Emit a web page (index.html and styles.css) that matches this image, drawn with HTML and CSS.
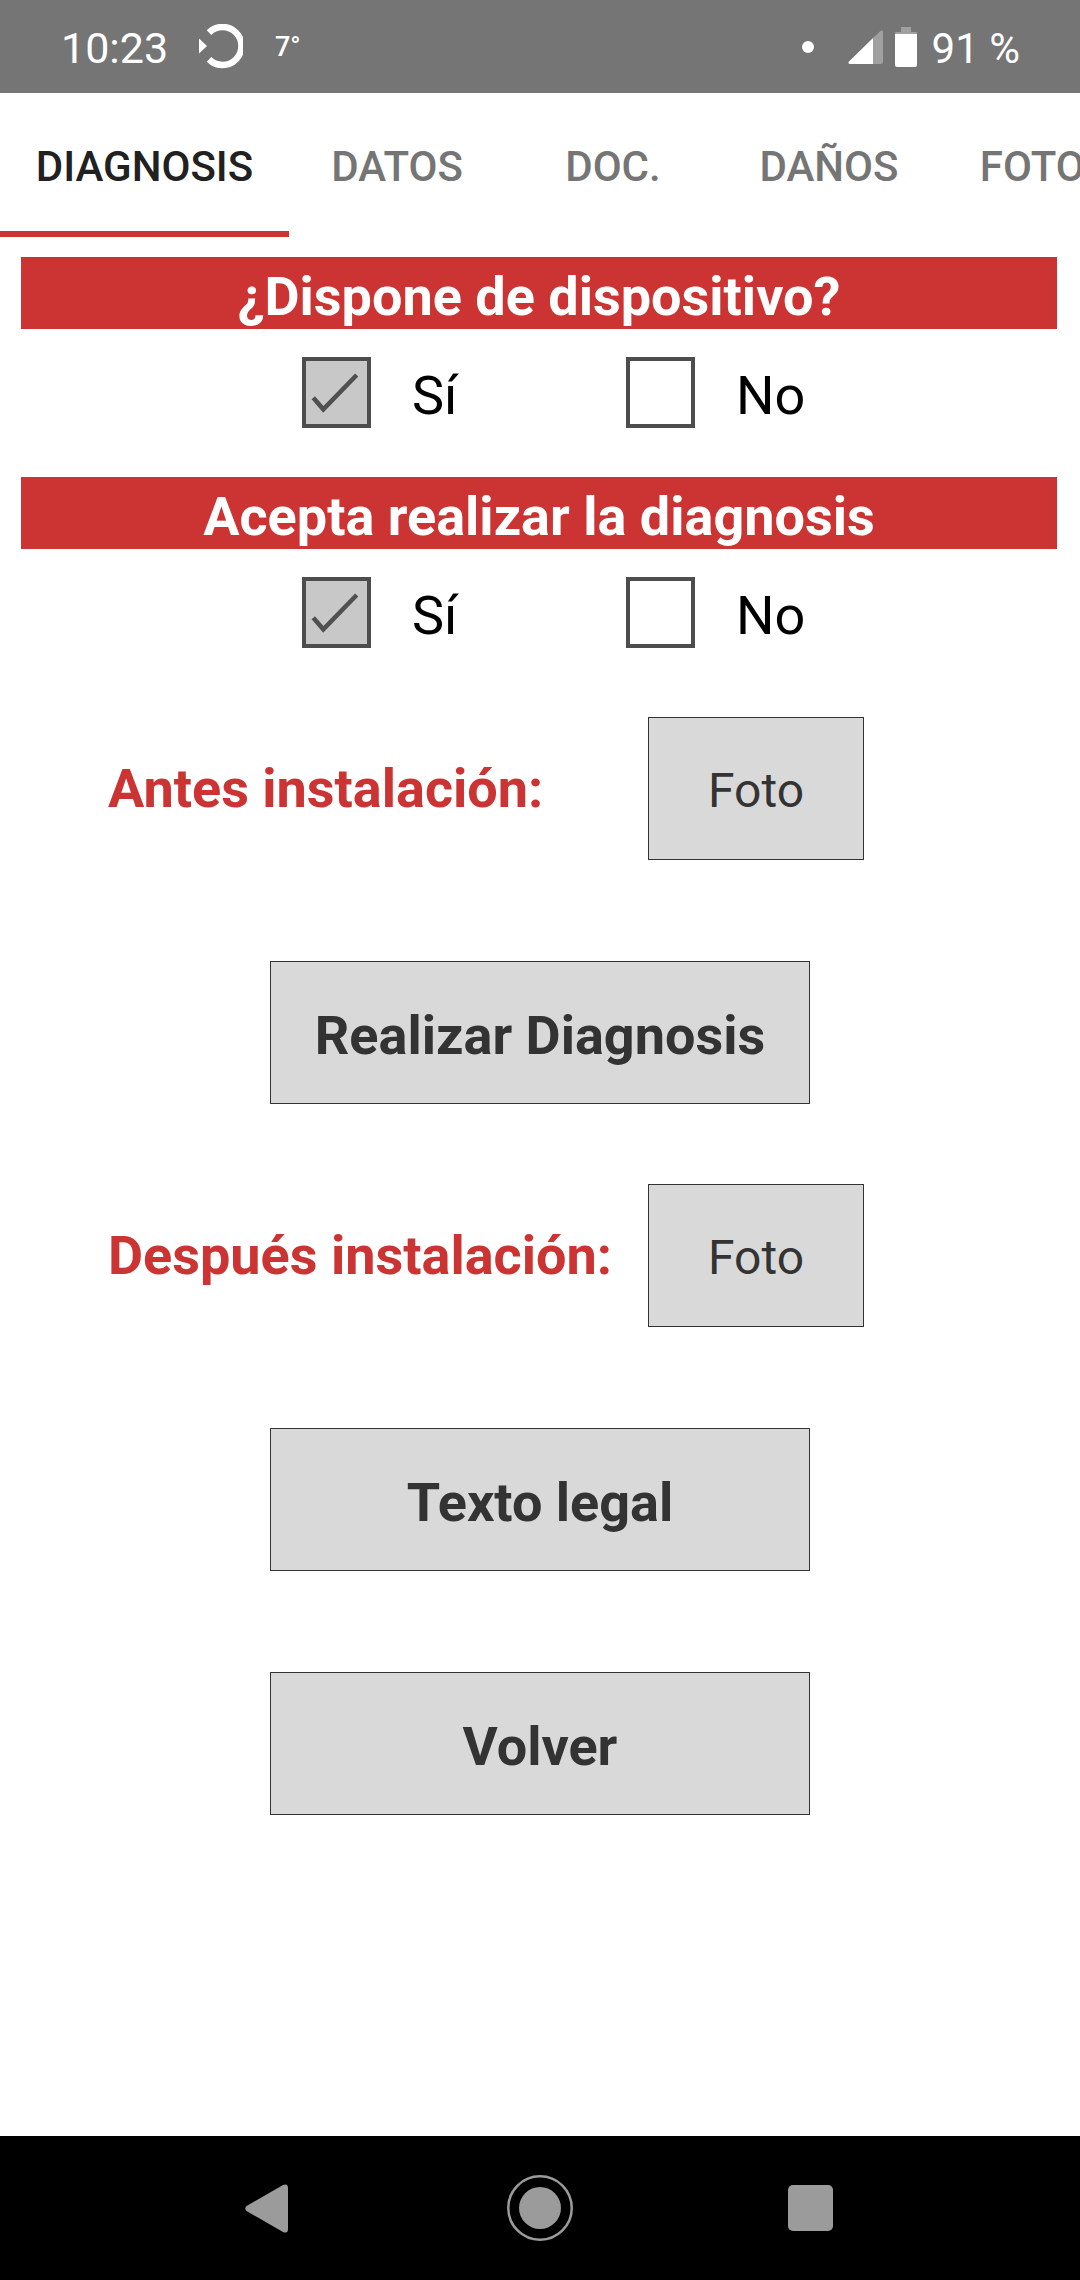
FILE: index.html
```html
<!DOCTYPE html>
<html>
<head>
    <title>Diagnosis</title>
    <link rel="stylesheet" href="styles.css">
</head>
<body>
    <div class="status-bar">
        <span class="clock">10:23</span>
        <svg class="spinner" width="44" height="46" viewBox="0 0 44 46">
            <path d="M10 8.6 A19 19 0 1 1 10 35.4" fill="none" stroke="#fff" stroke-width="6.5"/>
            <path d="M0 14.5 L8 22 L0 29.5 Z" fill="#fff"/>
        </svg>
        <span class="temp">7°</span>
        <span class="status-right">
            <span class="dot"></span>
            <svg class="signal" width="35" height="34" viewBox="0 0 35 34">
                <path d="M25 8 L0.5 32 Q0 34 2 34 L25 34 Z" fill="#fff"/>
                <path d="M25 8 L33 0.5 Q35 0 35 2 L35 32 Q35 34 33 34 L25 34 Z" fill="#a0a0a0"/>
            </svg>
            <svg class="battery" width="22" height="40" viewBox="0 0 22 40">
                <path d="M6 0 H16 V5 H21 Q22 5 22 6 V7 H0 V6 Q0 5 1 5 H6 Z" fill="#a0a0a0"/>
                <path d="M0 7 H22 V38 Q22 40 20 40 H2 Q0 40 0 38 Z" fill="#fff"/>
            </svg>
            <span class="battery-text">91 %</span>
        </span>
    </div>

    <nav class="tabs">
        <div class="tab tab-active">DIAGNOSIS</div>
        <div class="tab">DATOS</div>
        <div class="tab">DOC.</div>
        <div class="tab">DAÑOS</div>
        <div class="tab">FOTOS</div>
    </nav>

    <main class="content">
        <h2 class="banner">¿Dispone de dispositivo?</h2>
        <div class="options">
            <div class="option">
                <span class="box box-checked">
                    <svg width="62" height="64" viewBox="0 0 62 64"><path d="M8.3 37.7 L18.3 49.3 L51.7 15" fill="none" stroke="#505050" stroke-width="4.5"/></svg>
                </span>
                <span class="option-label">Sí</span>
            </div>
            <div class="option">
                <span class="box"></span>
                <span class="option-label">No</span>
            </div>
        </div>

        <h2 class="banner banner-next">Acepta realizar la diagnosis</h2>
        <div class="options">
            <div class="option">
                <span class="box box-checked">
                    <svg width="62" height="64" viewBox="0 0 62 64"><path d="M8.3 37.7 L18.3 49.3 L51.7 15" fill="none" stroke="#505050" stroke-width="4.5"/></svg>
                </span>
                <span class="option-label">Sí</span>
            </div>
            <div class="option">
                <span class="box"></span>
                <span class="option-label">No</span>
            </div>
        </div>

        <div class="photo-row photo-first">
            <span class="photo-label">Antes instalación:</span>
            <button class="photo-btn">Foto</button>
        </div>
        <button class="action-btn">Realizar Diagnosis</button>
        <div class="photo-row photo-second">
            <span class="photo-label">Después instalación:</span>
            <button class="photo-btn">Foto</button>
        </div>
        <button class="action-btn">Texto legal</button>
        <button class="action-btn">Volver</button>
    </main>

    <div class="nav-bar">
        <svg class="nav-back" width="43" height="49" viewBox="0 0 43 49">
            <path d="M1.5 22 L38 1 Q43 -1 43 4 L43 45 Q43 50 38 48 L1.5 27 Q-1 24.5 1.5 22 Z" fill="#9b9b9b"/>
        </svg>
        <svg class="nav-home" width="66" height="66" viewBox="0 0 66 66">
            <circle cx="33" cy="33" r="31.75" fill="none" stroke="#9b9b9b" stroke-width="2.5"/>
            <circle cx="33" cy="33" r="21" fill="#9b9b9b"/>
        </svg>
        <span class="nav-square"></span>
    </div>
</body>
</html>
```

FILE: styles.css
```css
* {
    box-sizing: border-box;
}
body {
    margin: 0;
    width: 1080px;
    height: 2280px;
    display: flex;
    flex-direction: column;
    background-color: white;
    font-family: Roboto, sans-serif;
    overflow: hidden;
}

/* status bar */
.status-bar {
    height: 93px;
    background-color: #757575;
    color: white;
    display: flex;
    align-items: center;
    padding-left: 61px;
    flex-shrink: 0;
}
.clock {
    font-size: 43px;
    width: 138px;
    padding-top: 3px;
}
.spinner {
    margin-right: 32px;
}
.temp {
    font-size: 27px;
    font-weight: 500;
}
.status-right {
    margin-left: auto;
    display: flex;
    align-items: center;
    padding-right: 60px;
}
.dot {
    width: 12px;
    height: 12px;
    border-radius: 50%;
    background-color: white;
    margin-right: 34px;
}
.signal {
    margin-right: 12px;
}
.battery {
    margin-right: 15px;
}
.battery-text {
    font-size: 42px;
    padding-top: 3px;
}

/* tabs */
.tabs {
    height: 144px;
    display: flex;
    overflow: hidden;
    flex-shrink: 0;
}
.tab {
    width: 216px;
    flex-shrink: 0;
    display: flex;
    align-items: center;
    justify-content: center;
    padding-top: 2px;
    font-size: 42px;
    font-weight: 500;
    color: #757575;
}
.tab-active {
    width: 289px;
    color: #212121;
    border-bottom: 6px solid #cc3333;
    padding-top: 8px;
}

/* form */
.content {
    flex: 1;
    display: flex;
    flex-direction: column;
    align-items: flex-start;
    padding-top: 20px;
}
.banner {
    width: 1036px;
    height: 72px;
    margin: 0 0 0 21px;
    background-color: #cc3333;
    color: white;
    font-size: 54px;
    font-weight: 700;
    line-height: 79px;
    text-align: center;
}
.banner-next {
    margin-top: 49px;
}
.options {
    display: flex;
    margin: 28px 0 0 302px;
}
.option {
    width: 324px;
    display: flex;
    align-items: center;
    gap: 41px;
}
.box {
    width: 69px;
    height: 71px;
    border: 4px solid #4d4d4d;
    display: block;
}
.box svg {
    display: block;
    margin: -1px 0 0 -1px;
}
.box-checked {
    background-color: #c8c8c8;
}
.option-label {
    font-size: 54px;
    color: black;
    padding-top: 5px;
}
.photo-row {
    display: flex;
    align-items: center;
    padding-left: 108px;
}
.photo-first {
    margin-top: 69px;
}
.photo-second {
    margin-top: 80px;
}
.photo-label {
    width: 540px;
    font-size: 54px;
    font-weight: 700;
    color: #cc3333;
}
.photo-btn {
    width: 216px;
    height: 143px;
    padding: 3px 0 0;
    background-color: #d9d9d9;
    border: 1px solid #333;
    border-radius: 0;
    color: #333;
    font-family: Roboto, sans-serif;
    font-size: 48px;
}
.action-btn {
    width: 540px;
    height: 143px;
    margin: 101px 0 0 270px;
    padding: 5px 0 0;
    background-color: #d9d9d9;
    border: 1px solid #333;
    border-radius: 0;
    color: #333;
    font-family: Roboto, sans-serif;
    font-size: 54px;
    font-weight: 700;
}

/* android nav bar */
.nav-bar {
    height: 144px;
    background-color: black;
    flex-shrink: 0;
    display: flex;
    align-items: center;
    padding: 0 0 0 245px;
}
.nav-back {
    margin: 0 219px 0 0;
}
.nav-home {
    margin-right: 215px;
}
.nav-square {
    width: 45px;
    height: 46px;
    border-radius: 5px;
    background-color: #9b9b9b;
}
```
